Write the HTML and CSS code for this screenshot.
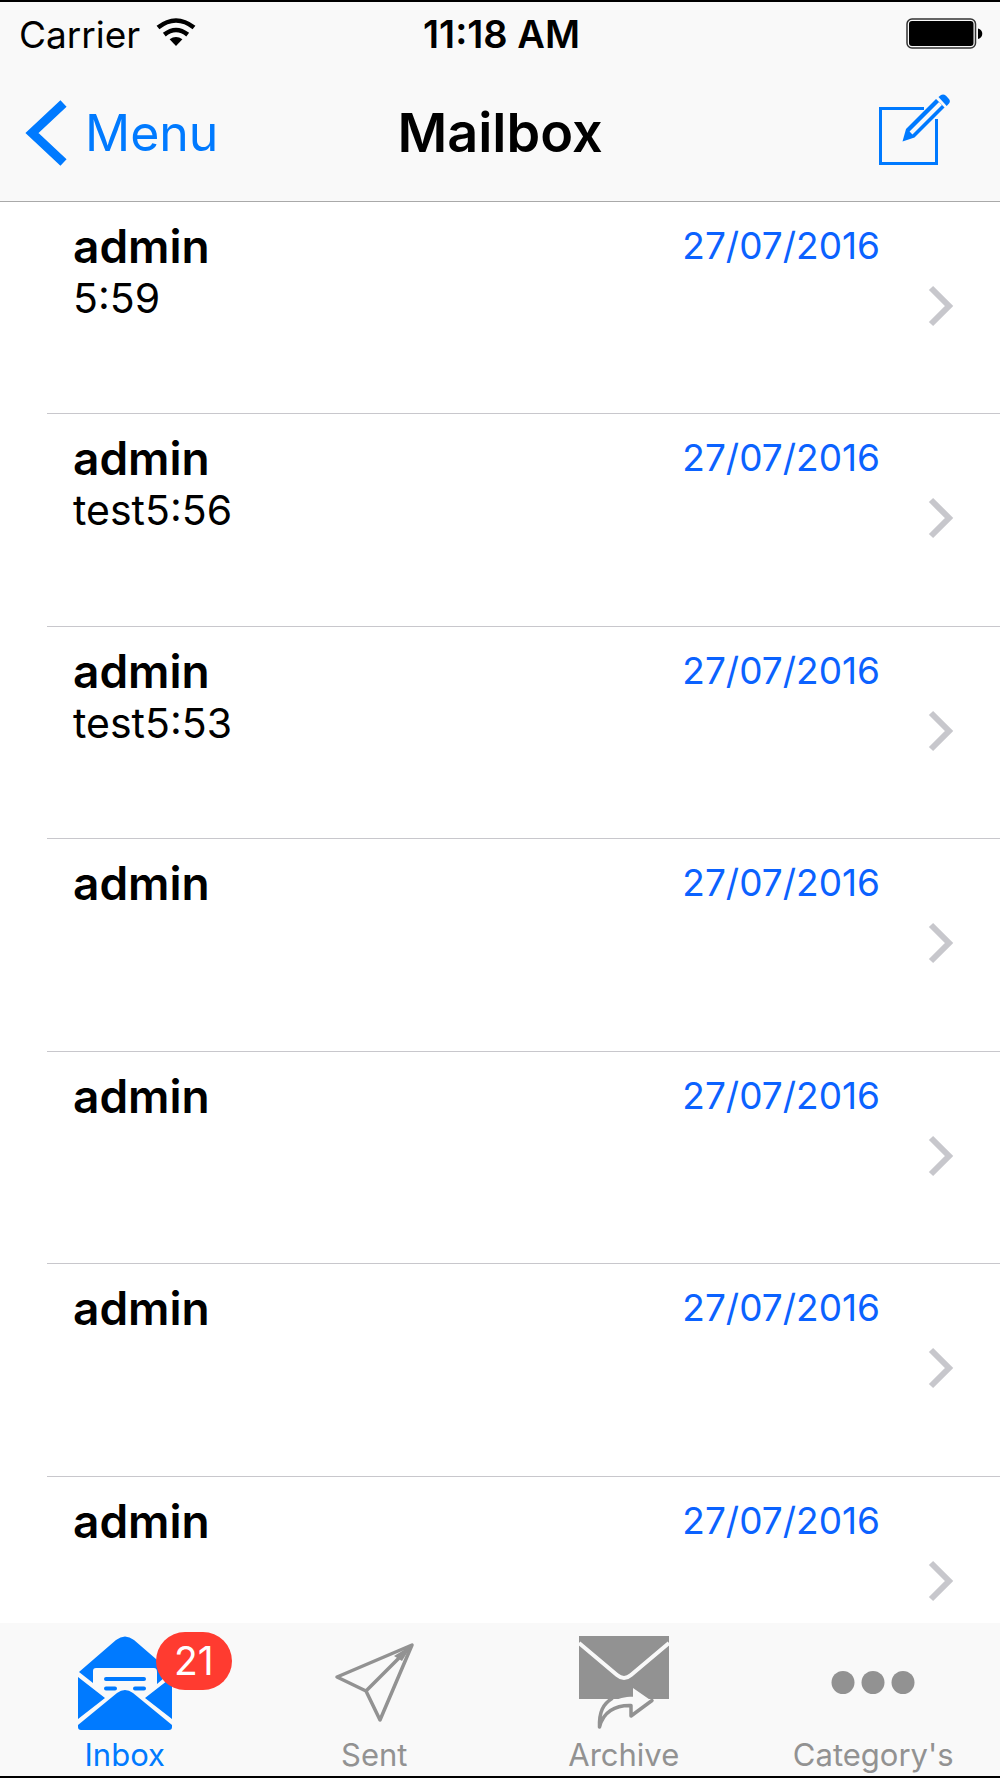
FILE: index.html
```html
<!DOCTYPE html>
<html lang="en">
<head>
<meta charset="utf-8">
<meta name="viewport" content="width=device-width, initial-scale=1">
<title>Mailbox</title>
<link rel="stylesheet" href="styles.css">
</head>
<body>
<div class="app">
  <header class="header">
    <div class="status">
      <div class="status-left">
        <span>Carrier</span>
        <svg class="wifi" width="40" height="30" viewBox="0 0 40 30" aria-hidden="true">
          <g fill="none" stroke="#000" stroke-width="4.600">
            <path d="M2 9.500Q20 -4.500 38 9.500"/>
            <path d="M8.300 16.600Q20 7.400 31.700 16.600"/>
          </g>
          <path d="M13.600 21.200Q20 16.600 26.400 21.200L20 28Z"/>
        </svg>
      </div>
      <span class="clock">11:18 AM</span>
      <svg class="battery" width="78" height="32" viewBox="0 0 78 32" role="img" aria-label="Battery full">
        <rect x="1" y="1" width="68.500" height="29" rx="5" fill="none" stroke="#333" stroke-width="1.500"/>
        <rect x="3" y="3" width="64.500" height="25" rx="3"/>
        <path d="M72 10.500C77.700 11.500 77.700 20 72 21Z"/>
      </svg>
    </div>
    <nav class="navbar">
      <a class="back" href="#menu">
        <svg width="40" height="66" viewBox="0 0 40 66" aria-hidden="true"><path d="M36.500 3.500L5 33L36.500 62.500" fill="none" stroke="currentColor" stroke-width="9"/></svg>
        <span>Menu</span>
      </a>
      <h1 class="title">Mailbox</h1>
      <button class="compose" type="button" aria-label="Compose">
        <svg width="74" height="74" viewBox="0 0 74 74" aria-hidden="true">
          <path d="M46 15.500H2.500V70.500H58.500V26" fill="none" stroke="currentColor" stroke-width="3"/>
          <path d="M24.500 48.500L28 36L58.500 5.500L67 14L36.500 44.500Z" fill="currentColor"/>
          <path d="M33 40L62.500 10.500" fill="none" stroke="#f9f9f9" stroke-width="4"/>
          <path d="M57.500 4L68.500 15" fill="none" stroke="#f9f9f9" stroke-width="2"/>
          <path d="M60.500 4L63 2Q65.500 .500 68 2.800L70.500 5.500Q73 8 71 10.500L68.700 13Z" fill="currentColor"/>
        </svg>
      </button>
    </nav>
  </header>

  <main class="mail">
    <ul class="list">
      <li><a class="row" href="#m1"><span class="message"><b>admin</b><span>5:59</span></span><time>27/07/2016</time><svg class="chevron" viewBox="0 0 26 42" aria-hidden="true"><path d="M3 3L21 21L3 39"/></svg></a></li>
      <li><a class="row" href="#m2"><span class="message"><b>admin</b><span>test5:56</span></span><time>27/07/2016</time><svg class="chevron" viewBox="0 0 26 42" aria-hidden="true"><path d="M3 3L21 21L3 39"/></svg></a></li>
      <li><a class="row" href="#m3"><span class="message"><b>admin</b><span>test5:53</span></span><time>27/07/2016</time><svg class="chevron" viewBox="0 0 26 42" aria-hidden="true"><path d="M3 3L21 21L3 39"/></svg></a></li>
      <li><a class="row" href="#m4"><span class="message"><b>admin</b></span><time>27/07/2016</time><svg class="chevron" viewBox="0 0 26 42" aria-hidden="true"><path d="M3 3L21 21L3 39"/></svg></a></li>
      <li><a class="row" href="#m5"><span class="message"><b>admin</b></span><time>27/07/2016</time><svg class="chevron" viewBox="0 0 26 42" aria-hidden="true"><path d="M3 3L21 21L3 39"/></svg></a></li>
      <li><a class="row" href="#m6"><span class="message"><b>admin</b></span><time>27/07/2016</time><svg class="chevron" viewBox="0 0 26 42" aria-hidden="true"><path d="M3 3L21 21L3 39"/></svg></a></li>
      <li><a class="row" href="#m7"><span class="message"><b>admin</b></span><time>27/07/2016</time><svg class="chevron" viewBox="0 0 26 42" aria-hidden="true"><path d="M3 3L21 21L3 39"/></svg></a></li>
    </ul>
  </main>

  <nav class="tabs">
    <a class="tab active" href="#inbox" aria-current="page">
      <span class="icon">
        <svg width="94" height="94" viewBox="0 0 94 94" aria-hidden="true">
          <path d="M1 36L38 4Q47 -3 56 4L93 36L79 48V36Q79 32 76 32H18Q15 32 15 35V47Z" fill="currentColor"/>
          <path d="M0 41L27 62L0 83ZM94 41L67 62L94 83ZM0 89L39 57Q47 51 55 57L94 89V91Q94 94 91 94H3Q0 94 0 91Z" fill="currentColor"/>
          <path d="M28 43H66M28 52.500H37M57 52.500H66" fill="none" stroke="currentColor" stroke-width="4" stroke-linecap="round"/>
        </svg>
        <span class="badge">21</span>
      </span>
      <span>Inbox</span>
    </a>
    <a class="tab" href="#sent">
      <span class="icon">
        <svg width="82" height="94" viewBox="0 0 82 94" aria-hidden="true">
          <path d="M4 41L79 9L47 84L33 55ZM33 55L79 9" fill="none" stroke="currentColor" stroke-width="3.500" stroke-linejoin="round"/>
          <path d="M79 9L61 20L69 25Z" fill="currentColor"/>
        </svg>
      </span>
      <span>Sent</span>
    </a>
    <a class="tab" href="#archive">
      <span class="icon">
        <svg width="90" height="94" viewBox="0 0 90 94" aria-hidden="true">
          <path d="M0 0H90V63H0Z" fill="currentColor"/>
          <path d="M0 7L38 39Q45 45 52 39L90 7" fill="none" stroke="#f9f9f9" stroke-width="4"/>
          <path d="M25 80C27 67 37 61 54 60.500V52L71 64.500L52 64.500V69.500C38 68 30 72 25 80ZM54 52L72 64.500L54 77Z" fill="#f9f9f9"/>
          <path d="M20.500 91C20 76 24 68 33 62.500M20.500 91C24 76 36 69 52 69.500V80L73 64.500" fill="none" stroke="currentColor" stroke-width="3.500" stroke-linejoin="round" stroke-linecap="round"/>
        </svg>
      </span>
      <span>Archive</span>
    </a>
    <a class="tab" href="#categories">
      <span class="icon">
        <svg width="82" height="94" viewBox="0 0 82 94" aria-hidden="true" fill="currentColor">
          <circle cx="11" cy="46.500" r="11.500"/><circle cx="41" cy="46.500" r="11.500"/><circle cx="71" cy="46.500" r="11.500"/>
        </svg>
      </span>
      <span>Category's</span>
    </a>
  </nav>
</div>
</body>
</html>
```
FILE: styles.css
```css
* { box-sizing: border-box; }

body {
  margin: 0;
  background: #fff;
  color: #000;
  font-family: Inter, "Liberation Sans", sans-serif;
}

a { color: inherit; text-decoration: none; }
svg { display: block; overflow: visible; }

.app {
  display: flex;
  flex-direction: column;
  height: 100vh;
  border-top: 2px solid #000;
  border-bottom: 2px solid #000;
}

.header {
  background: #f9f9f9;
  border-bottom: 1px solid #a9a9a9;
}

.status {
  display: grid;
  grid-template-columns: 1fr auto 1fr;
  align-items: center;
  height: 64px;
  padding: 0 16px 0 19px;
  font-size: 37px;
}
.status-left { display: flex; align-items: center; gap: 16px; }
.wifi { margin-bottom: 2px; }
.clock { font-size: 38px; font-weight: 600; }
.battery { justify-self: end; }

.navbar {
  display: grid;
  grid-template-columns: 1fr auto 1fr;
  align-items: center;
  height: 135px;
  padding: 0 27px 2px;
}
.back {
  display: flex;
  align-items: center;
  gap: 18px;
  color: #007aff;
  font-size: 50px;
}
.title { margin: 0; font-size: 54px; font-weight: 600; }
.compose {
  justify-self: end;
  margin: 0 21px 6px 0;
  padding: 0;
  border: 0;
  background: none;
  color: #007aff;
}

.mail { flex: 1; min-height: 0; overflow-y: auto; scrollbar-width: none; }
.list {
  display: grid;
  grid-auto-rows: 212px 213px;
  margin: 0;
  padding: 0 0 0 47px;
  list-style: none;
}
.row {
  display: flex;
  height: 100%;
  padding: 18px 46px 0 26px;
  border-bottom: 1px solid #c8c7cc;
}
.message {
  display: flex;
  flex: 1;
  flex-direction: column;
  font-size: 41px;
  line-height: 52px;
}
.message b { font-size: 46px; font-weight: 600; }
.row time { color: #0b62ff; font-size: 37px; line-height: 52px; }
.chevron {
  width: 26px;
  height: 42px;
  margin: 65px 0 0 48px;
  fill: none;
  stroke: #c7c7cc;
  stroke-width: 6px;
}

.tabs {
  display: grid;
  grid-template-columns: repeat(4, 1fr);
  height: 153px;
  padding: 13px 2px 0 0;
  background: #f9f9f9;
}
.tab {
  display: flex;
  flex-direction: column;
  align-items: center;
  gap: 5px;
  color: #929292;
  font-size: 31px;
  line-height: 40px;
}
.tab.active { color: #007aff; }
.icon { position: relative; }
.badge {
  position: absolute;
  top: -4px;
  left: 78px;
  min-width: 76px;
  height: 58px;
  border-radius: 29px;
  background: #ff3b30;
  color: #fff;
  font-size: 39px;
  line-height: 58px;
  text-align: center;
}
```
